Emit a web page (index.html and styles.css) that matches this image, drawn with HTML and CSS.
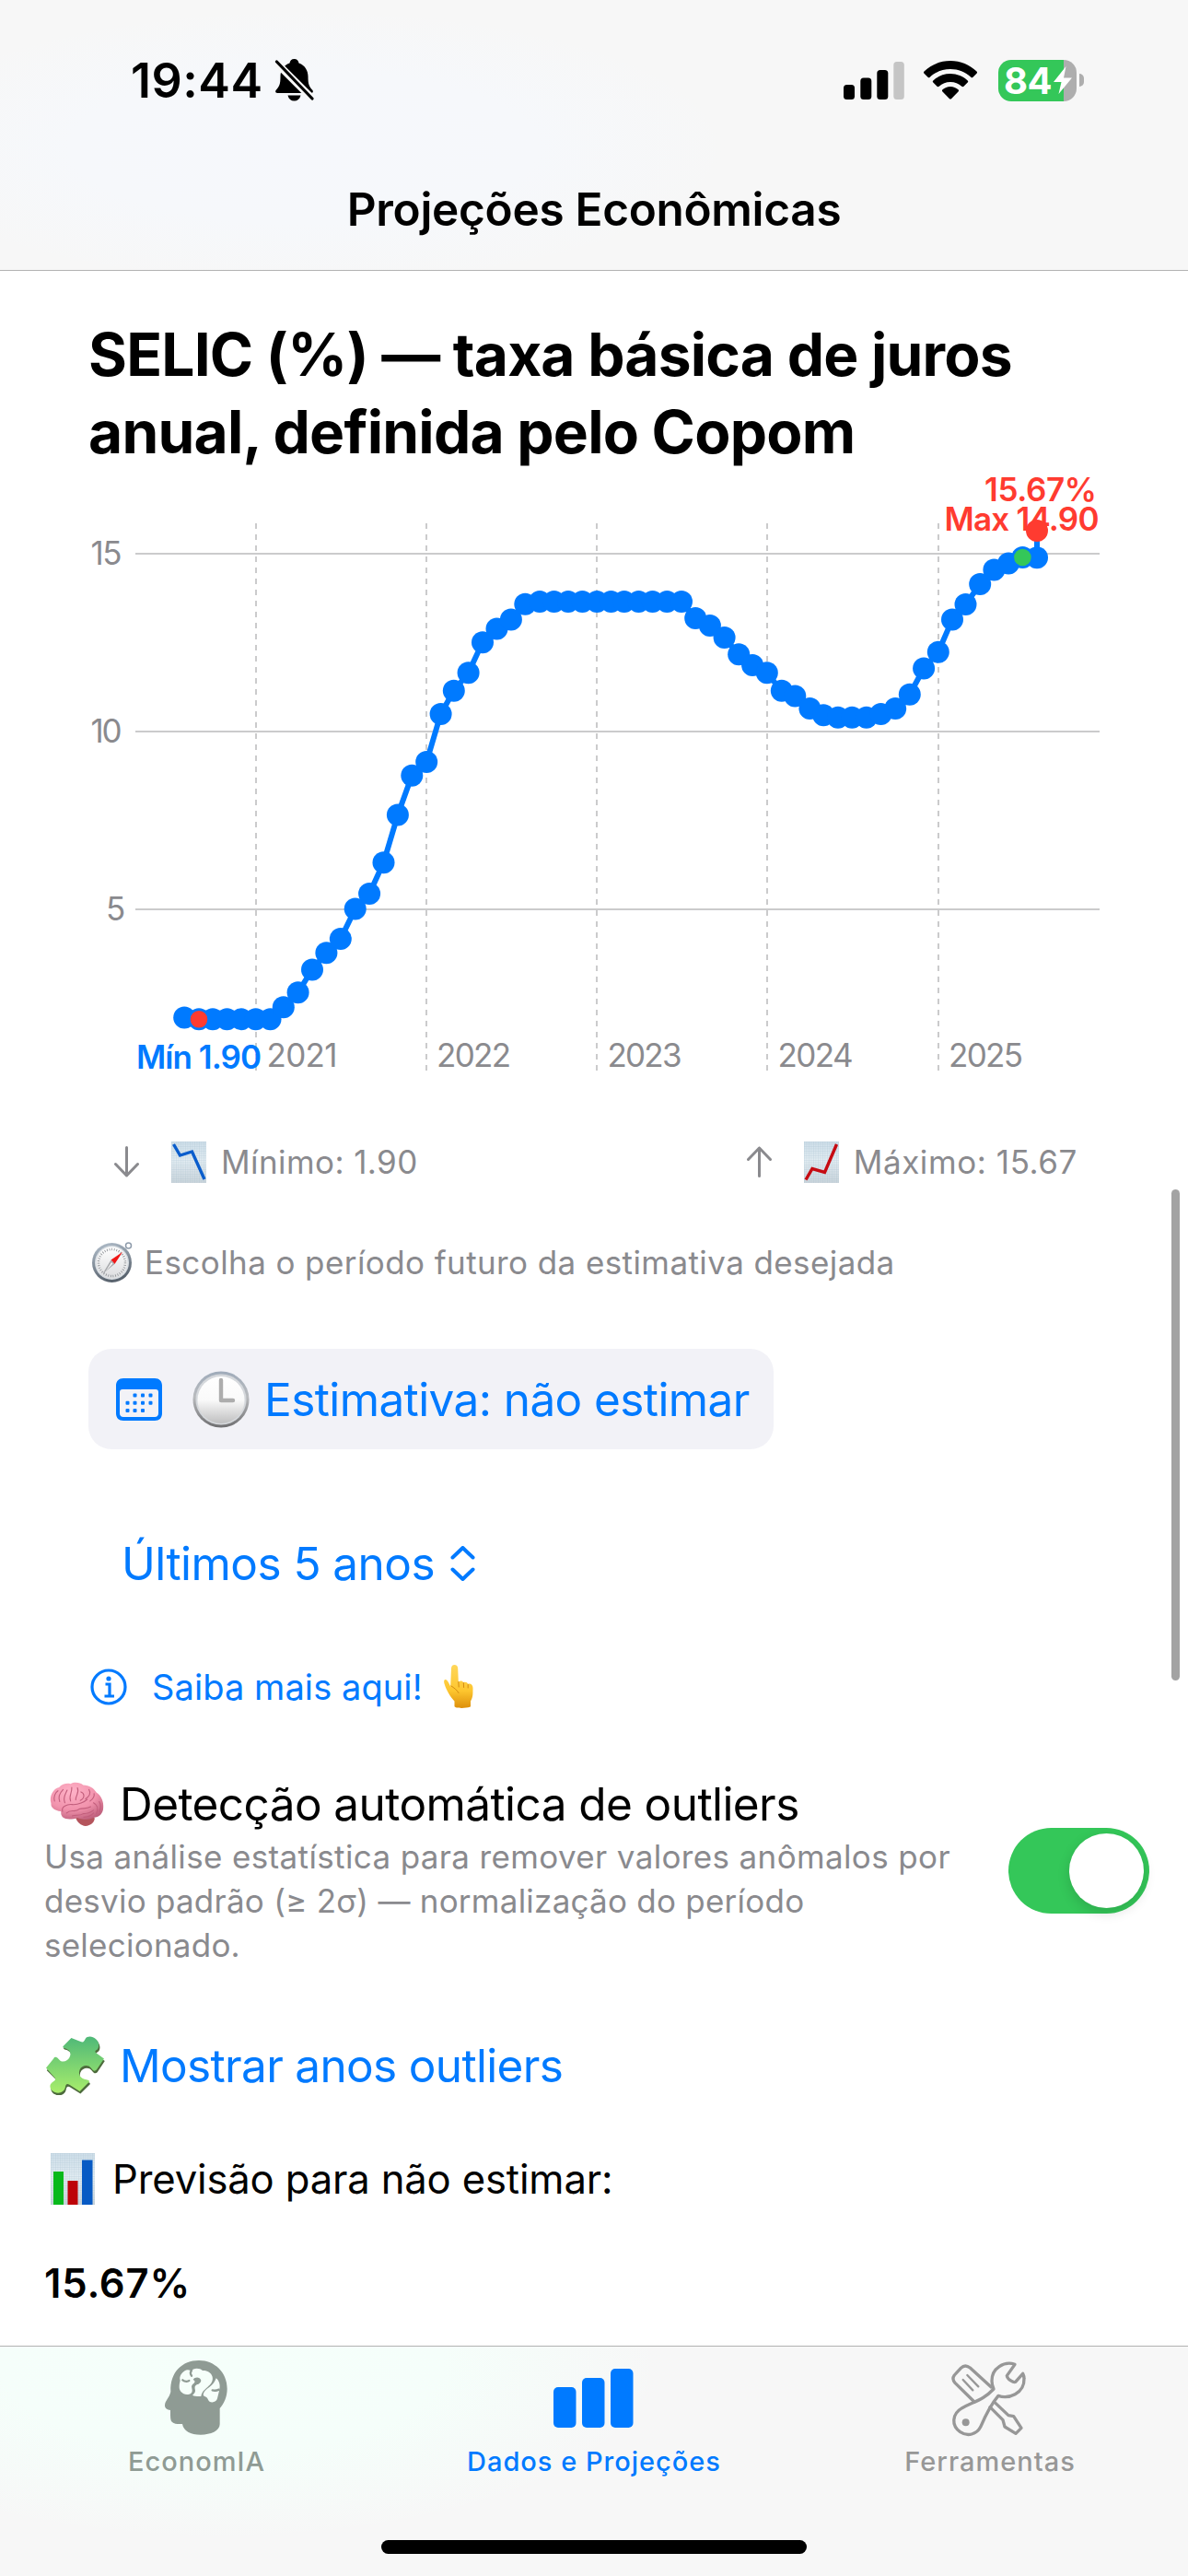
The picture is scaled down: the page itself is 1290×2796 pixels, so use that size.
FILE: index.html
```html
<!DOCTYPE html>
<html lang="pt-BR">
<head>
<meta charset="utf-8">
<title>Projeções Econômicas</title>
<link rel="stylesheet" href="styles.css">
</head>
<body>
<header class="topbar">
  <div class="status">
    <span class="time">19:44</span>
    <svg class="bell" viewBox="0 0 42 46"><path d="M21 0c3 0 4.600 2 5 4.500C33 7 36 13 36 19c0 8 1 11 5 15 1 2 0 3-2 3H3c-2 0-3-1-2-3 4-4 5-7 5-15C6 13 9 7 16 4.500 16.400 2 18 0 21 0zM14 39.500h14c-1 4-3.500 6-7 6s-6-2-7-6z"/><path class="bell-gap" d="M2 4.500L40 42.500"/><path class="bell-slash" d="M2 3L40.500 43"/></svg>
    <svg class="signal" viewBox="0 0 66 43"><rect x="0" y="26" width="12" height="16" rx="3.500"/><rect x="18.300" y="18.500" width="12" height="23.500" rx="3.500"/><rect x="36.300" y="10" width="12" height="32" rx="3.500"/><rect class="off" x="54.300" y="1" width="11.500" height="41" rx="3.500"/></svg>
    <svg class="wifi" viewBox="0 0 58 42"><path d="M29 0C40 0 50 4.300 57.500 11.500c.7.700.7 1.500 0 2.200l-4 4c-.700.700-1.500.700-2.200 0C45.300 12.200 37.500 9 29 9S12.700 12.200 6.700 17.700c-.7.700-1.500.700-2.200 0l-4-4c-.7-.7-.7-1.500 0-2.200C8 4.300 18 0 29 0z"/><path d="M29 14c7.200 0 13.800 2.800 18.700 7.400.7.700.7 1.500 0 2.200l-4.200 4.200c-.7.700-1.500.600-2.200 0C38 24.800 33.700 23 29 23s-9 1.800-12.300 4.800c-.7.600-1.500.700-2.200 0l-4.200-4.200c-.7-.7-.7-1.500 0-2.200C15.200 16.800 21.800 14 29 14z"/><path d="M29 28c3.300 0 6.300 1.300 8.500 3.300.7.700.7 1.500 0 2.200l-7.300 7.400c-.8.800-1.600.8-2.400 0l-7.300-7.400c-.7-.7-.7-1.500 0-2.200C22.700 29.300 25.700 28 29 28z"/></svg>
    <div class="battery"><div class="cell"><span class="level">84</span><svg class="bolt" viewBox="0 0 22 30"><path d="M14.500 0L1 17h8.500L6.500 30 21 12.500h-9z"/></svg></div><i class="nub"></i></div>
  </div>
  <h1 class="title">Projeções Econômicas</h1>
</header>

<main class="content">
  <h2 class="heading">SELIC (%) — taxa básica de juros<br>anual, definida pelo Copom</h2>

  <svg class="chart" viewBox="0 511 1290 669">
    <defs><marker id="dot" markerUnits="userSpaceOnUse" markerWidth="26" markerHeight="26" refX="13" refY="13"><circle cx="13" cy="13" r="12"/></marker></defs>
    <g class="grid"><path d="M147 601H1194M147 794H1194M147 987H1194"/></g>
    <g class="grid dashed"><path d="M278 568V1163M463 568V1163M648 568V1163M833 568V1163M1019 568V1163"/></g>
    <g class="axis">
      <text x="98.500" y="613" textLength="34">15</text><text x="98.500" y="806" textLength="34">10</text><text x="115" y="999">5</text>
      <text x="289.500" y="1158" textLength="77">2021</text><text x="474" y="1158" textLength="81">2022</text><text x="659.500" y="1158" textLength="81">2023</text><text x="844.500" y="1158" textLength="82">2024</text><text x="1030" y="1158" textLength="81">2025</text>
    </g>
    <polyline class="series" points="200.200,1104.500 216,1106.300 231,1106.300 246.500,1106.300 261.900,1106.300 277.700,1106.300 293.500,1106.300 307.800,1093.200 323.600,1077.200 339,1052.500 354.400,1034.300 369.800,1019.100 385.700,986.600 401.100,970.100 416.500,936.300 431.900,884.600 447.300,841.700 463.200,827 478.600,774.900 492.800,749.800 508.600,730.300 524,697.300 539.500,682.600 554.900,672.600 570.300,655.700 586.100,653.100 601.600,653.100 617,653.100 632.400,653.100 648.200,653.100 663.500,653.100 677.800,653.100 693.500,653.100 708.600,653.100 724.300,653.100 740,653.100 755.200,670.900 770.900,679.100 786.600,692.100 802.200,710.300 817.100,722 832.800,730.300 848.800,749.800 863.300,755.400 879.400,768.900 894.200,776.200 909.900,778.800 925.200,778.800 940.800,778.800 956.500,774.900 972.200,768.900 987.800,753.700 1003.100,725.500 1018.800,707.700 1034,672.600 1048.500,656.100 1064.200,634 1079.400,618.400 1095.100,611.400 1110.400,605 1126,605.200"/>
    <path class="stem" d="M1126 605V576"/>
    <circle class="red" cx="216" cy="1106.300" r="9.300"/>
    <circle class="green" cx="1110.400" cy="605" r="9.300"/>
    <g class="notes">
      <text class="blue" x="148" y="1159.500" textLength="136">Mín 1.90</text>
      <text class="red" x="1069" y="543.500" textLength="122">15.67%</text>
      <text class="red" x="1025.500" y="575.500" textLength="168">Max 14.90</text>
    </g>
    <circle class="red" cx="1126" cy="576" r="12"/>
  </svg>

  <div class="extremes">
    <svg class="arrow" viewBox="0 0 27 34"><path d="M13.500 1.500V32M1.500 19.500L13.500 32l12-12.500"/></svg>
    <svg class="sheet" viewBox="0 0 38 45"><defs><linearGradient id="paper" x1="0" y1="0" x2="0" y2="1"><stop offset="0" stop-color="#cfdfea"/><stop offset=".45" stop-color="#e3edf3"/><stop offset="1" stop-color="#cbd5dc"/></linearGradient><pattern id="cells" width="2.500" height="2.500" patternUnits="userSpaceOnUse"><path d="M0 0H2.500M0 0V2.500" stroke="#9db6c8" stroke-width=".7" opacity=".55"/></pattern></defs><rect width="38" height="45" fill="url(#paper)"/><rect width="38" height="45" fill="url(#cells)"/><path d="M2.500 3L9.500 15l13-4L36 41" fill="none" stroke="#0a5dcc" stroke-width="3.400"/></svg>
    <span class="min-label">Mínimo: 1.90</span>
    <svg class="arrow up" viewBox="0 0 27 34"><path d="M13.500 32.500V2M1.500 14.500L13.500 2l12 12.500"/></svg>
    <svg class="sheet" viewBox="0 0 38 45"><rect width="38" height="45" fill="url(#paper)"/><rect width="38" height="45" fill="url(#cells)"/><path d="M2 41.500L9 29.500l13.500 4L35.500 3" fill="none" stroke="#c60b12" stroke-width="3.400"/></svg>
    <span class="max-label">Máximo: 15.67</span>
  </div>

  <p class="hint">
    <svg class="compass" viewBox="0 0 44 44"><defs><linearGradient id="rim" x1="0" y1="0" x2=".3" y2="1"><stop offset="0" stop-color="#b5c2cf"/><stop offset="1" stop-color="#59636e"/></linearGradient><linearGradient id="face" x1="0" y1="0" x2="0" y2="1"><stop offset="0" stop-color="#fff"/><stop offset="1" stop-color="#dcdddf"/></linearGradient></defs><circle cx="39.500" cy="4" r="3" fill="none" stroke="#8e9bab" stroke-width="1.500"/><circle cx="21.500" cy="22.500" r="21.500" fill="url(#rim)"/><circle cx="21.500" cy="22.500" r="18.500" fill="#d9dee3"/><circle cx="21.500" cy="22.500" r="17" fill="url(#face)"/><circle cx="21.500" cy="22.500" r="14.500" fill="none" stroke="#8b8f94" stroke-width="2.500" stroke-dasharray=".8 1.800"/><path d="M33 11L20.500 19.500l4 4.500z" fill="#f01616"/><path d="M11.500 34.500L20.500 19.500l4 4.500z" fill="#a8aaad"/><path d="M15 31.500l6-9.500 1.500 1.500z" fill="#f5f5f5"/></svg>
    <span>Escolha o período futuro da estimativa desejada</span>
  </p>

  <button class="estimate">
    <svg class="calendar" viewBox="0 0 50 46"><path fill-rule="evenodd" d="M8 0h34c5 0 8 3 8 8v30c0 5-3 8-8 8H8c-5 0-8-3-8-8V8c0-5 3-8 8-8zM7 12c-2 0-3 1-3 3v23c0 2.500 1.500 4 4 4h34c2.500 0 4-1.500 4-4V15c0-2-1-3-3-3z"/><g><rect x="18.500" y="16.500" width="4" height="4" rx="1"/><rect x="27" y="16.500" width="4" height="4" rx="1"/><rect x="35.500" y="16.500" width="4" height="4" rx="1"/><rect x="10.500" y="24.800" width="4" height="4" rx="1"/><rect x="18.500" y="24.800" width="4" height="4" rx="1"/><rect x="27" y="24.800" width="4" height="4" rx="1"/><rect x="35.500" y="24.800" width="4" height="4" rx="1"/><rect x="10.500" y="33" width="4" height="4" rx="1"/><rect x="18.500" y="33" width="4" height="4" rx="1"/><rect x="27" y="33" width="4" height="4" rx="1"/></g></svg>
    <svg class="clock" viewBox="0 0 62 62"><defs><linearGradient id="bezel" x1="0" y1="0" x2="0" y2="1"><stop offset="0" stop-color="#9fabba"/><stop offset=".45" stop-color="#b9bbbe"/><stop offset="1" stop-color="#6f6f71"/></linearGradient><linearGradient id="dial" x1="0" y1="0" x2="0" y2="1"><stop offset="0" stop-color="#fff"/><stop offset=".5" stop-color="#fafafa"/><stop offset="1" stop-color="#bfbfc0"/></linearGradient></defs><circle cx="31" cy="31" r="30.500" fill="url(#bezel)"/><circle cx="31" cy="31" r="27.500" fill="#d5d8dc"/><circle cx="31" cy="31.500" r="25.500" fill="url(#dial)"/><path d="M31 10v22h13" fill="none" stroke="#adadad" stroke-width="4.400" stroke-linecap="round" stroke-linejoin="round"/></svg>
    <span>Estimativa: não estimar</span>
  </button>

  <div class="range">
    <span>Últimos 5 anos</span>
    <svg class="chevrons" viewBox="0 0 26 38"><path d="M2 12.500L13 2l11 10.500M2 25.500L13 36l11-10.500"/></svg>
  </div>

  <a class="more">
    <svg class="info" viewBox="0 0 40 40"><circle cx="20" cy="20" r="18"/><path d="M16.500 17h4.500v12.500M15.500 30h10.500"/><circle class="tittle" cx="20" cy="11" r="2.600"/></svg>
    <span>Saiba mais aqui!</span>
    <svg class="hand" viewBox="0 0 32 48"><defs><linearGradient id="skin" x1="0" y1="0" x2="0" y2="1"><stop offset="0" stop-color="#ffd75a"/><stop offset=".6" stop-color="#fdc62f"/><stop offset="1" stop-color="#dd8f0a"/></linearGradient></defs><path fill="url(#skin)" d="M11.500 0c2.200 0 3.600 1.500 3.700 4l.6 14.500c2-1.500 4.600-1 5.400.7 2-1 4.300-.2 4.900 1.500 2.700-1 5.400.8 5.400 4.300 0 8 0 10-2.500 14.500v5.500c0 2-17 3-17.500 0v-5.500C7 35 2.500 27 .6 20.800c-.8-2.600-.6-4.500.9-4.800 2-.3 3.200 2.500 5.700 7.500L8 4c.1-2.500 1.400-4 3.500-4z"/><path d="M15.800 18.500l.4 5.500M21.300 19.500l.3 5M26.200 21.500v3.500M8 23c3 2 6 4 8 7.500" fill="none" stroke="#d48b12" stroke-width="1" stroke-linecap="round"/></svg>
  </a>

  <section class="outliers">
    <div class="outliers-copy">
      <h3 class="outliers-title">
        <svg class="brain" viewBox="12 20 212 164"><defs><radialGradient id="lobe" cx=".4" cy=".25" r=".8"><stop offset="0" stop-color="#ffb3c8"/><stop offset=".6" stop-color="#f192ac"/><stop offset="1" stop-color="#c0627e"/></radialGradient></defs><path d="M122 150c10-8 60-6 66 2 0 14-14 26-32 27-16-2-30-14-34-29z" fill="#b4545c"/><path fill="url(#lobe)" d="M36 100c-8-26 8-52 28-56 10-12 28-16 40-12 14-8 34-4 44 4 22 0 38 12 46 26 18 12 26 34 24 54 0 18-14 34-34 34-20 10-44 6-56 0-16 6-40 8-52-2-8-10-4-16-6-20-20-4-36-12-34-28z"/><g fill="none" stroke="#c25e7c" stroke-width="3.600" stroke-linecap="round"><path d="M48 92c-4-14 2-30 12-36M66 94c-6-16 0-30 12-42M84 98c-8-18 2-30 8-44M104 92c-8-18 6-28 4-48M122 88c-2-16 14-22 6-42M138 90c18-10 14-26 2-30M156 84c14-8 20-20 12-32M172 92c8-6 16-16 14-26"/><path d="M76 128c-6-16 16-26 34-24 20 2 44-10 52-18M90 134c16-16 30 0 44-14 14-6 22 2 40-8M110 144c12-6 24 2 38-8 18 0 28-6 36-12M184 98c12 6 18 20 10 38M150 148c10 0 26-4 34-14M204 94c6 10 6 22 0 36"/></g></svg>
        <span>Detecção automática de outliers</span>
      </h3>
      <p class="outliers-text">Usa análise estatística para remover valores anômalos por<br><span class="tight">desvio padrão (≥ 2σ) — normalização do período<br>selecionado.</span></p>
    </div>
    <div class="toggle"><i class="knob"></i></div>
  </section>

  <a class="show">
    <svg class="puzzle" viewBox="0 0 63 63"><defs><linearGradient id="piece" x1="0" y1="0" x2="0" y2="1"><stop offset="0" stop-color="#4fb878"/><stop offset="1" stop-color="#a9ee6b"/></linearGradient></defs><path fill="#4d6b3c" transform="translate(.8 1.600)" d="M27 2.500l10 4c3 1.500 4-1 5-3C44-.5 50 0 53 3c4 3 5 9 2 12-2 1.500-3.500 2-1.500 4L62 25l-8 12c-2 2-4 1-6-2-3-4-10-3-12 2-2 5 1 9 5 10 4 1 6 1 5 3L36 60 25 53c-3-2-4 0-4.500 3-1 5-7 7-11 5C4 59 3 53 6 50c2-2 6-3 3-6L0 35l8-11c2-3 4-1 6 1 3 4 9 2 11-2 3-6-1-9-5-10-3-1-2-2-1-3z"/><path fill="url(#piece)" d="M27 2l10 4c3 1.500 4-1 5-3C44-.5 50 0 53 3c4 3 4 8 2 11-2 1.500-3.500 2-1.500 4L62 24l-8 12c-2 2-4 1-6-2-3-4-10-3-12 2-2 5 1 9 5 10 4 1 6 1 5 3L36 59 25 52c-3-2-4 0-4.500 3-1 5-7 7-11 5C4 58 3 53 6 50c2-2 6-3 3-6L0 34l8-10c2-3 4-1 6 1 3 4 9 2 11-2 3-6-1-9-5-10-3-1-2-2-1-3z"/></svg>
    <span>Mostrar anos outliers</span>
  </a>

  <p class="forecast">
    <svg class="bars" viewBox="0 0 48 56"><rect width="48" height="56" fill="url(#paper)"/><rect width="48" height="56" fill="url(#cells)"/><path fill="#08b91c" d="M3 20h11v36H3z"/><path fill="#bd0309" d="M18.500 30H29.500v26h-11z"/><path fill="#075ac4" d="M34 7.500h11.500V56H34z"/></svg>
    <span>Previsão para não estimar:</span>
  </p>
  <p class="value">15.67%</p>
  <i class="scrollbar"></i>
</main>

<nav class="tabs">
  <a class="tab">
    <svg class="tab-icon" viewBox="0 0 330 315"><path fill="#8f9b94" d="M168 36c52 0 92 40 92 92 0 26-10 48-24 64v52c0 22-30 34-62 34-34 0-56-12-60-35-14 1-26 0-33-6-6-5-6-14-6-39-10-1-18-6-18-15 0-16 15-25 19-45-3-64 38-102 92-102z"/><path fill="#f6fffa" d="M122 70c6-4 12-4 20 0 9-10 28-10 38-1 14-1 28 6 32 20 3 16-6 24-16 34-10 9-19 16-21 30-10 1-22 0-28-4 10-8 10-14 8-20-1-8 0-10 6-14 8-2 14-8 14-14-4-12-20-12-26-2 8 4 6 8 2 12-6 4-8 8-6 16 4 14-4 20-12 20-18 2-30-12-29-26 0-8 2-14 3-20-4-12 4-24 15-31z"/><path fill="#f6fffa" d="M224 94c10 8 14 22 11 36-3 14-5 22-7 30-3 14-26 18-31 2-3-8-14-8-15-14 1-10 8-16 20-25 12-8 18-18 22-29z"/><g fill="none" stroke="#8f9b94" stroke-width="7" stroke-linecap="round"><path d="M144 68c-5 6-4 12 0 18M115 100c8 6 18 5 21 2M233 131c-8 4-14 4-21 2"/></g></svg>
    <span class="tab-label econ">EconomIA</span>
  </a>
  <a class="tab active">
    <svg class="tab-icon" viewBox="0 0 110 105"><g fill="#007aff"><rect x="11" y="41" width="24.500" height="44" rx="5"/><rect x="42" y="31" width="24.500" height="54" rx="5"/><rect x="73" y="21" width="24.500" height="64" rx="5"/></g></svg>
    <span class="tab-label">Dados e Projeções</span>
  </a>
  <a class="tab">
    <svg class="tab-icon" viewBox="0 0 330 315"><g fill="none" stroke="#979797" stroke-width="10" stroke-linejoin="round" stroke-linecap="round"><path d="M114 171L51 109c-8-9-8-17-2-25l21-23c9-9 20-9 30-1l69 63"/><path d="M77 99l32 34M91 84l36 37" stroke-width="7"/><path d="M183 175l42 40 17 3 25 38-18 18-36-22-6-22-42-42"/><path d="M246 49c-34-12-76 12-75 54 0 12 4 22 6 26-34 36-62 40-103 62-34 20-35 57-6 78 24 16 54 8 66-16 12-28 28-66 58-102 32 12 86-6 84-56 0-6-2-12-4-16l-24 27c-6 3-26-8-28-20z"/></g><circle cx="86" cy="238" r="12" fill="#979797"/></svg>
    <span class="tab-label">Ferramentas</span>
  </a>
  <i class="home"></i>
</nav>
</body>
</html>
```
FILE: styles.css
```css
* { box-sizing: border-box; }
html, body { margin: 0; }
body {
  width: 1290px;
  height: 2796px;
  display: flex;
  flex-direction: column;
  overflow: hidden;
  background: #fff;
  color: #000;
  font-family: Inter, "Liberation Sans", sans-serif;
  font-size: 49.5px;
}
svg { display: block; flex: none; }
h1, h2, h3, p { margin: 0; font-weight: 400; }
span { white-space: nowrap; }

/* Status and navigation bar */
.topbar {
  height: 294px;
  flex: none;
  border-bottom: 1px solid #b2b2b2;
  background: radial-gradient(ellipse 460px 150px at 330px 160px, #f6f8fc 0, #f6f8fb 55%, rgba(247, 247, 247, 0) 100%), #f7f7f7;
}
.status { display: flex; align-items: center; height: 174px; padding-left: 142px; }
.time { font-weight: 600; font-size: 52px; letter-spacing: 0.5px; }
.bell { width: 43px; height: 46px; margin-left: 12px; }
.bell-gap { stroke: #f7f7f7; stroke-width: 8; }
.bell-slash { stroke: #000; stroke-width: 3.2; stroke-linecap: round; }
.signal { width: 66px; height: 43px; margin-left: auto; }
.signal .off { fill: #c5c5c5; }
.wifi { width: 58px; height: 42px; margin-left: 21px; }
.battery { display: flex; align-items: center; width: 93px; margin: 0 113px 0 23px; }
.cell {
  display: flex;
  align-items: center;
  width: 85px;
  height: 45px;
  padding-left: 6px;
  border-radius: 14px;
  background: linear-gradient(90deg, #34c759 71px, #aeaeae 71px);
}
.level { width: 53px; color: #fff; font-weight: 700; font-size: 40px; letter-spacing: -0.5px; }
.bolt { width: 22px; height: 30px; fill: #fff; }
.nub { width: 5px; height: 14px; margin-left: 3px; border-radius: 0 5px 5px 0; background: #aeaeae; }
.title { height: 106px; line-height: 106px; text-align: center; font-size: 49.5px; font-weight: 600; letter-spacing: -0.3px; }

/* Scrolling content */
.content { position: relative; height: 2252px; flex: none; padding-top: 49px; }
.heading { margin-left: 96px; font-weight: 700; font-size: 64px; line-height: 84px; letter-spacing: -0.77px; }
.chart { width: 1290px; height: 669px; }
.grid path { fill: none; stroke: #cbcbcc; stroke-width: 2; }
.dashed path { stroke-dasharray: 6 6; }
.axis { font-size: 35px; fill: #8a8a8e; }
.series, .stem { fill: none; stroke: #007aff; stroke-width: 6; stroke-linejoin: round; }
.series { marker: url(#dot); }
#dot circle { fill: #007aff; }
.red { fill: #ff3b30; }
.green { fill: #34c759; }
.blue { fill: #007aff; }
.notes { font-size: 35px; font-weight: 600; }

.extremes { display: flex; align-items: center; height: 60px; margin-top: 51px; padding-left: 124px; color: #8a8a8e; font-size: 35px; }
.arrow { width: 27px; height: 34px; fill: none; stroke: #8a8a8e; stroke-width: 3; stroke-linecap: round; stroke-linejoin: round; }
.arrow.up { margin-left: auto; }
.sheet { width: 38px; height: 45px; margin: 0 16px 0 35px; }
.min-label { letter-spacing: 0.42px; }
.max-label { margin-right: 120px; letter-spacing: 0.58px; }

.hint { display: flex; align-items: center; height: 50px; margin-top: 54px; padding-left: 100px; color: #8a8a8e; font-size: 35px; letter-spacing: 0.41px; }
.compass { width: 44px; height: 44px; margin-right: 13px; }

.estimate {
  display: flex;
  align-items: center;
  width: 744px;
  height: 109px;
  margin: 69px 0 0 96px;
  padding: 0 0 0 30px;
  border: 0;
  border-radius: 25px;
  background: #f2f2f7;
  color: #007aff;
  font: inherit;
  letter-spacing: -0.6px;
}
.calendar { width: 50px; height: 46px; fill: #007aff; }
.clock { width: 62px; height: 62px; margin: 0 16px 0 33px; }

.range { display: flex; align-items: center; height: 60px; margin-top: 94px; padding-left: 132px; color: #007aff; letter-spacing: -0.55px; }
.chevrons { width: 27px; height: 38px; margin-left: 17px; fill: none; stroke: #007aff; stroke-width: 4; stroke-linecap: round; stroke-linejoin: round; }

.more { display: flex; align-items: center; height: 50px; margin-top: 79px; padding-left: 98px; color: #007aff; font-size: 38px; letter-spacing: 0.08px; }
.info { width: 40px; height: 40px; margin-right: 27px; fill: none; stroke: #007aff; stroke-width: 3.2; }
.info .tittle { fill: #007aff; stroke: none; }
.hand { width: 32px; height: 48px; margin-left: 23px; }

.outliers { display: flex; margin-top: 72px; padding-left: 48px; }
.outliers-copy { width: 1047px; }
.outliers-title { display: flex; align-items: center; height: 60px; font-size: 49.5px; letter-spacing: -0.58px; }
.brain { width: 66px; height: 54px; margin-right: 16px; }
.outliers-text { margin-top: 3px; color: #8a8a8e; font-size: 35px; line-height: 48px; letter-spacing: 0.36px; }
.tight { letter-spacing: 0.24px; }
.toggle { width: 153px; height: 93px; margin-top: 56px; padding: 6px 6px 6px 66px; border-radius: 47px; background: #34c759; }
.knob { display: block; width: 81px; height: 81px; border-radius: 50%; background: #fff; box-shadow: 0 5px 14px rgba(0, 0, 0, .14); }

.show { display: flex; align-items: center; height: 62px; margin-top: 76px; padding-left: 50px; color: #007aff; letter-spacing: -0.67px; }
.puzzle { width: 64px; height: 64px; margin-right: 16px; }
.forecast { display: flex; align-items: center; height: 56px; margin-top: 64px; padding-left: 55px; font-size: 43.6px; letter-spacing: -0.15px; }
.bars { width: 48px; height: 56px; margin-right: 19px; }
.value { height: 56px; line-height: 56px; margin-top: 58px; padding-left: 48px; font-size: 43.6px; font-weight: 600; letter-spacing: 0.8px; }
.scrollbar { position: absolute; top: 997px; right: 9px; width: 9px; height: 533px; border-radius: 5px; background: #a3a3a3; }

/* Tab bar */
.tabs {
  display: grid;
  grid-template-columns: repeat(3, 430px);
  grid-template-rows: 210px 15px;
  height: 250px;
  flex: none;
  border-top: 1px solid #b2b2b2;
  background: radial-gradient(ellipse 480px 190px at 240px 20px, #f5fffa 0, #f5fefa 50%, rgba(247, 247, 247, 0) 100%), #f7f7f7;
}
.tab { display: flex; flex-direction: column; align-items: center; color: #979797; }
.tab.active { color: #007aff; }
.tab-icon { width: 110px; height: 105px; margin-top: 3px; }
.tab-label { height: 36px; margin-top: -1px; line-height: 36px; font-size: 29px; font-weight: 500; letter-spacing: 1px; }
.econ { padding-right: 3px; color: #8f9b94; }
.home { grid-column: 1 / -1; justify-self: center; width: 462px; height: 15px; border-radius: 8px; background: #000; }
```
